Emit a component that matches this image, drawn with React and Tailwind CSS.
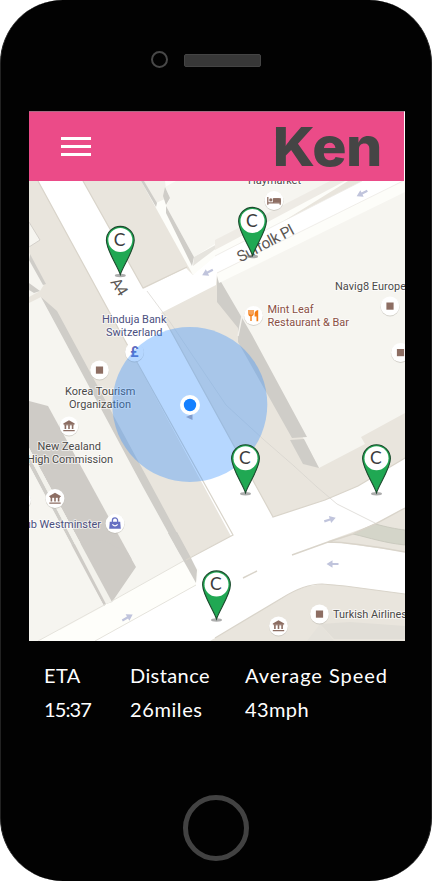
import React from "react";

const halo = { stroke: "#ffffff", strokeOpacity: 0.6, strokeWidth: 2, paintOrder: "stroke", strokeLinejoin: "round" };

function Label({ x, y, w, fill = "#4b4a48", children }) {
  return (
    <text x={x} y={y} textLength={w} fontSize="11" fill={fill} className="font-['Roboto',sans-serif]" {...halo}>
      {children}
    </text>
  );
}

function Poi({ x, y, children }) {
  return (
    <g transform={`translate(${x} ${y})`}>
      <circle cy="0.8" r="9.6" fill="#bdb9b0" opacity="0.6" />
      <circle r="9.4" fill="#fff" />
      {children}
    </g>
  );
}

const Square = () => <rect x="-3.6" y="-3.5" width="7.2" height="7.2" fill="#8d6e63" />;

const Museum = () => (
  <g fill="#8d6e63">
    <path d="M0-5.7L5.7-2.6V-1.6H-5.7V-2.6Z" />
    <path d="M-4.4-1.6h1.6v4.6h-1.6zM-.8-1.6h1.6v4.6h-1.6zM2.8-1.6h1.6v4.6h-1.6zM-5.7 4h11.4v1.3h-11.4z" />
    <path d="M-4.9-1.6h9.8v.9h-9.8z" />
  </g>
);

function Arrow({ x, y, r }) {
  return (
    <path
      transform={`translate(${x} ${y}) rotate(${r})`}
      d="M-6-1.1H0V-3.7L6 0L0 3.7V1.1H-6Z"
      fill="#c0c4dc"
    />
  );
}

function Pin({ x, y }) {
  return (
    <g transform={`translate(${x} ${y})`}>
      <ellipse cy="35.2" rx="5.5" ry="1.7" fill="#777" opacity="0.6" />
      <path
        d="M0 34.2C-3 25-13.9 10-13.9 0A13.9 13.9 0 0 1 13.9 0C13.9 10 3 25 0 34.2Z"
        fill="#20a853"
        stroke="#1d4a2e"
        strokeWidth="1.1"
      />
      <circle cy="-0.4" r="12" fill="#fff" />
      <text x="-0.7" y="5.4" textAnchor="middle" fontSize="17.5" fill="#3c3c3c" className="font-['Lato',sans-serif]">
        C
      </text>
    </g>
  );
}

function StreetMap() {
  return (
    <svg className="block h-[460px] w-[376px]" viewBox="29 181 376 460">
      <rect x="29" y="181" width="376" height="460" fill="#e9e5dd" />

      {/* kerbside houses on the far left */}
      <path d="M29 222L40 240L29 247Z" fill="#f6f5f0" stroke="#d3d0ca" strokeWidth="1" />
      <path d="M29 253L45 283L40 291L29 297Z" fill="#f6f5f0" />
      <path d="M30 254L46 284L43 285L29 260ZM29 283L40 291L34 293L29 290Z" fill="#cfcdc8" />

      {/* western block */}
      <path d="M29 303L41 297L197 570L196 583L95 641H29Z" fill="#f6f5f0" />
      <path d="M41 297L57 311L197 570L196 583L143 487L62 336Z" fill="#cfcdc8" />
      <path d="M29 401L48 406L136 567L112 602L29 448Z" fill="#cecbc6" />
      <path d="M29 452L106 602L104 606L29 465Z" fill="#cfcdc8" />
      <path d="M29 448L112 602L106 604L29 456Z" fill="#f3f2ec" />

      {/* northern buildings */}
      <path d="M141 181L193 275L218 262L348 181Z" fill="#fdfdf9" />
      <path d="M143 181L156 203L167 198L165 181Z" fill="#f1efe9" />
      <path d="M144 181L157 203L156 207L141 181Z" fill="#cfcdc8" />
      <path d="M165 187L176 181H336L218 242L194 257L166 206L170 199Z" fill="#f6f5f0" />
      <path d="M165 187L170 198L166 205L163 196ZM166 206L194 257L192 266L166 213Z" fill="#cfcdc8" />
      <path d="M194 257L219 243L218 247L193 266Z" fill="#e6e4de" />
      <path d="M215 240L330 181H345L215 250Z" fill="#eeebe5" />

      {/* eastern building and its shadow */}
      <path d="M217 275L405 181V413L361 437L365 444L319 468Z" fill="#f6f5f0" />
      <path d="M217 275L252 335L307 437L292 438L238 342L238 328L217 302Z" fill="#cfcdc8" />
      <path d="M290 440L304 439L319 468L303 464Z" fill="#cfcdc8" />
      <path d="M238 336L242 316" stroke="#f2f0eb" strokeWidth="1.4" />

      {/* Suffolk Place */}
      <path d="M143 289L186 268L193 275L217 255L362 181H405L217 273L216 285L161 313L150 300Z" fill="#fff" />
      <path d="M217 273L405 180V192L219 283L217 276Z" fill="#fdfdf9" />
      <path d="M217 273L405 180M215 256L362 181" stroke="#eceae5" strokeWidth="0.8" />

      {/* lower carriageways */}
      <path d="M29 641L233 535L273 517L325 500L358 486L405 458V508L375 524L328 541L405 552V594L345 586C318 583 305 584 282 598L210 641Z" fill="#fff" />
      <path d="M36 641L187 559L199 570L196 585L95 641Z" fill="#fefefa" />
      <path d="M29 630V641H38L106 604L187 559L160 540Z" fill="#f6f5f0" />
      <path d="M103 540L128 553L136 567L112 602L106 604L104 606L70 545Z" fill="#cecbc6" />
      <path d="M29 448L112 602L106 604L29 456Z" fill="#f3f2ec" />
      <path d="M29 465L104 606L60 630L29 600Z" fill="#f6f5f0" />
      <path d="M95 641L196 585M38 641L106 604M112 601L187 559" stroke="#e5e3dc" strokeWidth="1" fill="none" />
      <path d="M177 532L190 556L197 570L196 583L168 533Z" fill="#cfcdc8" />

      {/* A4 */}
      <path d="M38 181H83L143 288L161 313L273 517L233 540L123 337Z" fill="#fff" />
      <path d="M38 181L123 337L233 535L186 560M83 181L143 288L187 267M166 322L273 517L325 500L358 486L405 458" stroke="#d9d4ca" strokeWidth="1.2" fill="none" />
      <path d="M147 291L170 322L226 405L263 439L294 466L317 487L337 504L345 508L405 538" stroke="#d5d2cd" strokeWidth="0.7" fill="none" />

      {/* central reservation */}
      <path d="M353 534L375 524C387 527 396 529 405 530V545C385 543 370 538 353 534Z" fill="#d4d5c9" stroke="#c5c5ba" strokeWidth="0.8" />
      <path d="M292 555L328 542L353 534L375 524L405 508M328 542Q350 542 405 552M243 578L257 571" stroke="#d9d4ca" strokeWidth="1.4" fill="none" />
      <path d="M215 638L282 598Q304 584 322 584L345 586L405 594" stroke="#d9d4ca" strokeWidth="1.2" fill="none" />
      <path d="M320 624L334 639H405V626L350 622Z" fill="#e1ded7" />
      <path d="M320 624L307 641H334Z" fill="#e5e2db" />

      <Arrow x="207.5" y="272.5" r="153" />
      <Arrow x="362" y="193.5" r="153" />
      <Arrow x="127.5" y="617.5" r="-30" />
      <Arrow x="330" y="519.5" r="-18" />
      <Arrow x="332.5" y="564" r="180" />

      <g className="font-['Roboto',sans-serif]" fill="#5d5854">
        <text transform="translate(110 282) rotate(58)" fontSize="15.5" textLength="18">A4</text>
        <text transform="translate(240.5 262.5) rotate(-28)" fontSize="15.5" textLength="62">Suffolk Pl</text>
      </g>

      <Label x="248" y="184" w="53">Haymarket</Label>
      <Label x="102" y="322.5" w="64.5" fill="#4c5080">Hinduja Bank</Label>
      <Label x="106" y="335.5" w="56.5" fill="#4c5080">Switzerland</Label>
      <Label x="65" y="394.5" w="70.5">Korea Tourism</Label>
      <Label x="69" y="407.5" w="62">Organization</Label>
      <Label x="37.5" y="449.5" w="63.5">New Zealand</Label>
      <Label x="27" y="462.5" w="86">High Commission</Label>
      <Label x="15" y="527.5" w="86" fill="#4c5080">Club Westminster</Label>
      <Label x="335" y="290" w="71">Navig8 Europe</Label>
      <Label x="267.5" y="312.5" w="46" fill="#8a5044">Mint Leaf</Label>
      <Label x="267.5" y="325.5" w="81.5" fill="#8a5044">Restaurant &amp; Bar</Label>
      <Label x="333" y="618" w="74">Turkish Airlines</Label>

      <Poi x="21.5" y="500" />
      <Poi x="99.5" y="370"><Square /></Poi>
      <Poi x="390" y="306"><Square /></Poi>
      <Poi x="400.5" y="352.5"><Square /></Poi>
      <Poi x="319.5" y="614"><Square /></Poi>
      <Poi x="69" y="426"><Museum /></Poi>
      <Poi x="55" y="498.5"><Museum /></Poi>
      <Poi x="278.5" y="626"><Museum /></Poi>
      <Poi x="134.5" y="352">
        <text y="5" textAnchor="middle" fontSize="14" fontWeight="700" fill="#5c6bc0" className="font-['Roboto',sans-serif]">£</text>
      </Poi>
      <Poi x="274" y="200.5">
        <path d="M-6.2-3.6V4.2M6.2 4.2V-1.6H-.5V2M-6.2 2.3H6.2" stroke="#8d6e63" strokeWidth="1.3" fill="none" />
        <path d="M-.5-2.2H4.6Q6.8-2.2 6.8 0V2H-.5Z" fill="#8d6e63" />
        <circle cx="-3.2" cy="-.6" r="1.6" fill="#8d6e63" />
      </Poi>
      <Poi x="253.5" y="315.5">
        <path d="M-4.5-5.5V-2Q-4.5.2-2.5.2T-.5-2V-5.5M-2.5-5.5V5.6" stroke="#f57f17" strokeWidth="1.4" fill="none" />
        <path d="M4.7-5.6V5.8H3V1H1.1V-2Q1.2-5 4.7-5.6Z" fill="#f57f17" />
      </Poi>
      <Poi x="115" y="523.5">
        <path d="M-5.2-1.8H5.2L5.8 5.3H-5.8Z" fill="#6670c2" />
        <path d="M-2.6-1.6V-3A2.6 2.6 0 0 1 2.6-3V-1.6" stroke="#6670c2" strokeWidth="1.3" fill="none" />
        <path d="M-2.6.8Q0 4 2.6.8" stroke="#fff" strokeWidth="1.2" fill="none" />
      </Poi>

      {/* current location */}
      <circle cx="189.8" cy="404.5" r="77.5" fill="#348fff" fillOpacity="0.36" />
      <path d="M186 417L192.5 414L192.5 420Z" fill="#829dcd" />
      <circle cx="190" cy="405" r="10" fill="#fff" />
      <circle cx="190" cy="405" r="6.2" fill="#1580ff" />

      <Pin x="120.3" y="240.3" />
      <Pin x="252.5" y="221.3" />
      <Pin x="245.5" y="458.6" />
      <Pin x="376.5" y="458.6" />
      <Pin x="216.5" y="584.8" />
    </svg>
  );
}

function Stat({ label, value, className, valueClass }) {
  return (
    <div className={className}>
      <div className="h-[34px]">{label}</div>
      <div className={valueClass}>{value}</div>
    </div>
  );
}

export default function App() {
  return (
    <div className="h-[881px] w-[432px] overflow-hidden bg-white">
      <main className="flex h-full flex-col rounded-[63px] border-x border-[#222] bg-[#020202] pl-7 pr-[26px]">
        <div className="flex h-[111px] shrink-0 items-start pl-[122px] pt-[51px]">
          <div className="h-[17px] w-[17px] rounded-full border-[2.5px] border-[#484848]" />
          <div className="ml-4 mt-[3px] h-[13px] w-[77px] rounded-[2px] border border-[#444] bg-[#373737]" />
        </div>

        <header className="flex h-[70px] w-[376px] shrink-0 items-center justify-between border-r border-t border-r-white border-t-[#a86c84] bg-[#eb4b88] pl-8 pr-[22px]">
          <button className="flex w-[30px] flex-col gap-[5px]" aria-label="Menu">
            <span className="h-[3px] bg-white" />
            <span className="h-[3px] bg-white" />
            <span className="h-[3px] bg-white" />
          </button>
          <h1 className="origin-right scale-x-[1.06] font-['Inter',sans-serif] text-[54px] font-extrabold leading-none tracking-[-0.6px] text-[#454545]">Ken</h1>
        </header>

        <div className="w-[376px] shrink-0">
          <StreetMap />
        </div>

        <section className="flex h-[154px] shrink-0 pl-[15px] pt-[19px] font-['Lato',sans-serif] text-[20px] leading-[30px] text-white">
          <Stat label="ETA" value="15:37" className="w-[86px] tracking-[0.4px]" valueClass="tracking-[-0.9px]" />
          <Stat label="Distance" value="26miles" className="w-[115px] tracking-[0.4px]" valueClass="tracking-[0.6px]" />
          <Stat label="Average Speed" value="43mph" className="w-[150px] tracking-[0.95px]" valueClass="tracking-[0.4px]" />
        </section>

        <div className="flex justify-center pr-[2px]">
          <button className="h-[66px] w-[66px] rounded-full border-[5px] border-[#424242]" aria-label="Home" />
        </div>
      </main>
    </div>
  );
}
